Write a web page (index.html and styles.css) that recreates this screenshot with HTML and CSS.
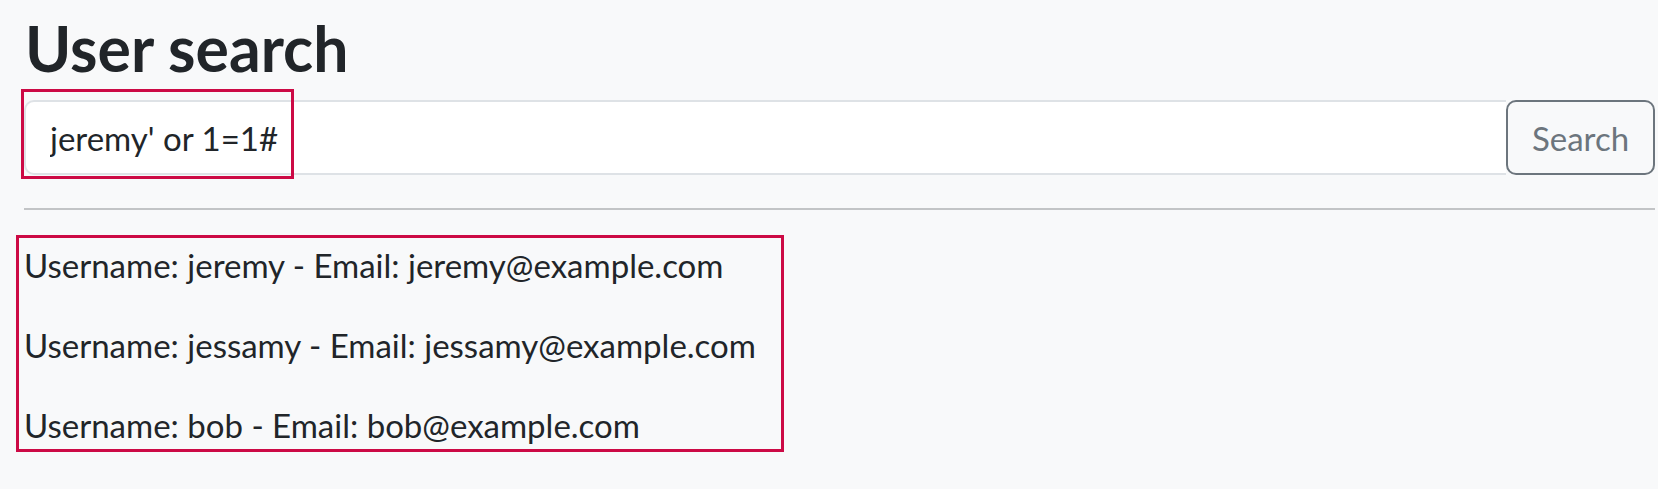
FILE: index.html
```html
<!DOCTYPE html>
<html lang="en">
<head>
<meta charset="utf-8">
<title>User search</title>
<link rel="stylesheet" href="styles.css">
</head>
<body>
<main class="container">
  <h1 class="title">User search</h1>
  <form class="search-group" onsubmit="return false">
    <div class="input-wrap">
      <input class="search-input" type="text" name="username" value="jeremy' or 1=1#">
      <span class="highlight highlight-input"></span>
    </div>
    <button class="search-btn" type="submit">Search</button>
  </form>
  <hr class="divider">
  <div class="results">
    <p class="result">Username: jeremy - Email: jeremy@example.com</p>
    <p class="result">Username: jessamy - Email: jessamy@example.com</p>
    <p class="result">Username: bob - Email: bob@example.com</p>
  </div>
</main>
</body>
</html>
```
FILE: styles.css
```css
html, body {
  margin: 0;
  padding: 0;
}

body {
  background: #f8f9fa;
  color: #212529;
  font-family: Lato, "Noto Sans", "Liberation Sans", sans-serif;
}

.container {
  padding: 0 3px 0 24px;
}

.title {
  margin: 10px 0 0 1px;
  font-size: 62.5px;
  font-weight: 700;
  line-height: 1.2;
  color: #212529;
}

.search-group {
  display: flex;
  margin: 15px 0 0 0;
  height: 75px;
}

.input-wrap {
  position: relative;
  flex: 1;
  display: flex;
}

.search-input {
  flex: 1;
  min-width: 0;
  box-sizing: border-box;
  height: 75px;
  margin: 0;
  padding: 0 24px;
  border: 2px solid #dee2e6;
  border-right: 0;
  border-radius: 10px 0 0 10px;
  background: #ffffff;
  color: #212529;
  font-family: inherit;
  font-size: 33px;
  outline: none;
}

.highlight {
  position: absolute;
  border: 3px solid #cc0a45;
  pointer-events: none;
}

.highlight-input {
  left: -3px;
  top: -11px;
  width: 273px;
  height: 90px;
  box-sizing: border-box;
}

.search-btn {
  box-sizing: border-box;
  height: 75px;
  width: 149px;
  margin: 0;
  padding: 0;
  border: 2px solid #6c757d;
  border-radius: 10px;
  background: #f8f9fa;
  color: #6c757d;
  font-family: inherit;
  font-size: 33px;
}

.divider {
  margin: 33px 0 0 0;
  border: 0;
  border-top: 2px solid #c2c4c6;
  height: 0;
}

.results {
  box-sizing: border-box;
  width: 768px;
  margin: 25px 0 0 -8px;
  padding: 3px 0 0 5px;
  border: 3px solid #cc0a45;
}

.result {
  margin: 0 0 32px 0;
  font-size: 33px;
  line-height: 48px;
}

.result:last-child {
  margin-bottom: 0;
}
```
